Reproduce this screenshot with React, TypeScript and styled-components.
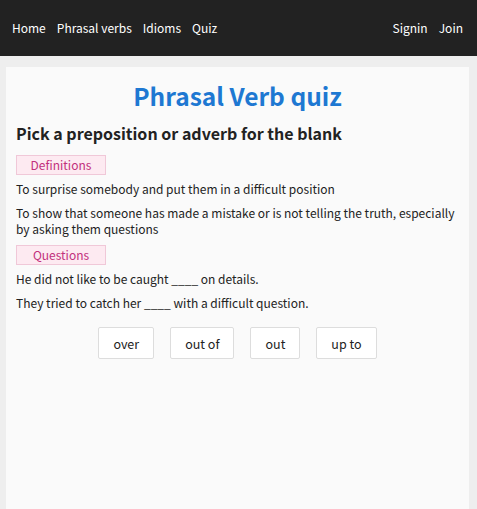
import React from "react";
import styled, { createGlobalStyle } from "styled-components";

const Global = createGlobalStyle`
  html, body { margin: 0; padding: 0; }
  body {
    background: #eeeeee;
    font-family: "Noto Sans CJK KR", "Noto Sans", sans-serif;
    color: #222;
  }
  * { box-sizing: border-box; }
`;

const Page = styled.div`
  min-height: 509px;
  display: flex;
  flex-direction: column;
`;

const Nav = styled.nav`
  height: 56px;
  background: #222222;
  display: flex;
  align-items: center;
  justify-content: space-between;
  padding: 0 14px 0 12px;
`;

const NavGroup = styled.div`
  display: flex;
  gap: 11px;
`;

const NavLink = styled.a`
  color: #ffffff;
  font-size: 12px;
  line-height: 20px;
  text-decoration: none;
`;

const Card = styled.main`
  flex: 1;
  margin: 11px 8px 0 6px;
  background: #fafafa;
  padding: 13px 10px 20px 10px;
`;

const Title = styled.h1`
  margin: 0;
  text-align: center;
  color: #1e78d2;
  font-size: 24.5px;
  line-height: 32px;
  font-weight: 700;
`;

const Heading = styled.h2`
  margin: 10px 0 0 0;
  font-size: 16px;
  line-height: 22px;
  font-weight: 700;
  color: #222;
`;

const Badge = styled.div<{ $first?: boolean }>`
  width: 90px;
  height: 20px;
  margin-top: ${(p) => (p.$first ? "11px" : "8px")};
  background: #fdeaf1;
  border: 1px solid #f0c8d8;
  color: #c2307c;
  font-size: 12px;
  line-height: 18px;
  text-align: center;
`;

const Text = styled.p<{ $first?: boolean }>`
  margin: ${(p) => (p.$first ? "6px" : "8px")} 0 0 0;
  font-size: 12px;
  line-height: 16px;
  color: #222;
`;

const Choices = styled.div`
  margin-top: 16px;
  display: flex;
  justify-content: center;
  gap: 16px;
`;

const Choice = styled.button`
  height: 32px;
  padding: 0 14px;
  background: #ffffff;
  border: 1px solid #dddddd;
  border-radius: 2px;
  font-family: inherit;
  font-size: 12.5px;
  color: #222;
`;

export default function App() {
  return (
    <Page>
      <Global />
      <Nav>
        <NavGroup>
          <NavLink>Home</NavLink>
          <NavLink>Phrasal verbs</NavLink>
          <NavLink>Idioms</NavLink>
          <NavLink>Quiz</NavLink>
        </NavGroup>
        <NavGroup>
          <NavLink>Signin</NavLink>
          <NavLink>Join</NavLink>
        </NavGroup>
      </Nav>
      <Card>
        <Title>Phrasal Verb quiz</Title>
        <Heading>Pick a preposition or adverb for the blank</Heading>
        <Badge $first>Definitions</Badge>
        <Text $first>To surprise somebody and put them in a difficult position</Text>
        <Text>
          To show that someone has made a mistake or is not telling the truth, especially by asking them questions
        </Text>
        <Badge>Questions</Badge>
        <Text $first>He did not like to be caught ____ on details.</Text>
        <Text>They tried to catch her ____ with a difficult question.</Text>
        <Choices>
          <Choice>over</Choice>
          <Choice>out of</Choice>
          <Choice>out</Choice>
          <Choice>up to</Choice>
        </Choices>
      </Card>
    </Page>
  );
}
